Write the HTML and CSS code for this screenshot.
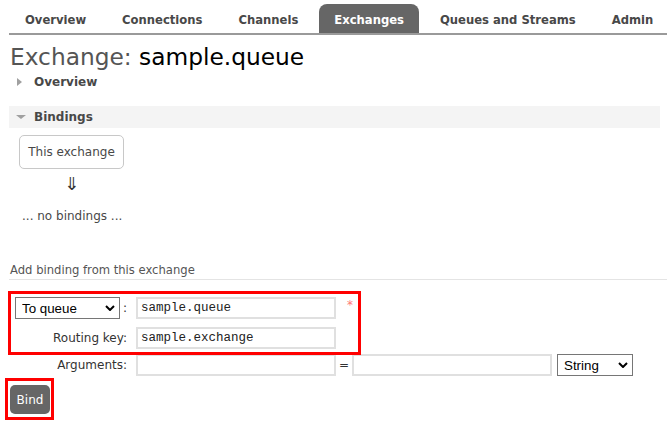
FILE: index.html
```html
<!DOCTYPE html>
<html>
<head>
<meta charset="utf-8">
<title>Exchange: sample.queue</title>
<link rel="stylesheet" href="styles.css">
</head>
<body>
<nav class="tabs">
  <a class="tab">Overview</a>
  <a class="tab">Connections</a>
  <a class="tab">Channels</a>
  <a class="tab tab-active">Exchanges</a>
  <a class="tab">Queues and Streams</a>
  <a class="tab">Admin</a>
</nav>
<h1 class="title"><span class="title-label">Exchange:</span> <span class="title-name">sample.queue</span></h1>
<div class="section"><span class="tri-slot"><span class="tri-right"></span></span>Overview</div>
<div class="section section-open"><span class="tri-slot"><span class="tri-down"></span></span>Bindings</div>
<div class="bindings">
  <div class="node">This exchange</div>
  <div class="arrow">⇓</div>
  <p class="empty">... no bindings ...</p>
</div>
<h2 class="subhead">Add binding from this exchange</h2>
<form class="bind-form">
  <div class="highlight">
    <div class="row">
      <div class="label">
        <span class="sel-box sel-dest">
          <select class="sel"><option>To queue</option></select>
          <svg class="chev" width="10" height="6" viewBox="0 0 10 6"><path d="M1 1 L5 5 L9 1" fill="none" stroke="#000" stroke-width="2"/></svg>
        </span><span class="colon">:</span>
      </div>
      <input class="field" type="text" value="sample.queue">
      <span class="req">*</span>
    </div>
    <div class="row">
      <div class="label">Routing key:</div>
      <input class="field" type="text" value="sample.exchange">
    </div>
  </div>
  <div class="row row-args">
    <div class="label">Arguments:</div>
    <input class="field" type="text">
    <span class="eq">=</span>
    <input class="field" type="text">
    <span class="sel-box sel-type">
      <select class="sel"><option>String</option></select>
      <svg class="chev" width="10" height="6" viewBox="0 0 10 6"><path d="M1 1 L5 5 L9 1" fill="none" stroke="#000" stroke-width="2"/></svg>
    </span>
  </div>
  <div class="btn-wrap"><button class="btn" type="button">Bind</button></div>
</form>
</body>
</html>
```

FILE: styles.css
```css
* { box-sizing: border-box; }

body {
  margin: 0;
  font: 12px "DejaVu Sans", Verdana, sans-serif;
  color: #484848;
  background: #fff;
}

.tabs {
  display: flex;
  margin-left: 9px;
  padding: 4px 0 0 1px;
  border-bottom: 2px solid #9a9a9a;
}

.tab {
  height: 29px;
  line-height: 32px;
  padding: 0 15px;
  margin-right: 6px;
  font-size: 11.6px;
  font-weight: bold;
  white-space: nowrap;
  color: #484848;
  border-radius: 8px 8px 0 0;
}

.tab-active {
  background: #666;
  color: #fff;
}

.title {
  margin: 5px 0 0 10px;
  height: 30px;
  font-size: 23.3px;
  line-height: 34px;
  font-weight: normal;
}

.title-label { color: #555; }
.title-name { color: #000; }

.section {
  display: flex;
  align-items: center;
  height: 22px;
  margin: 1px 7px 0 9px;
  font-weight: bold;
  color: #484848;
}

.section-open {
  margin-top: 13px;
  background: #f4f4f4;
}

.tri-slot {
  display: flex;
  align-items: center;
  width: 18px;
  margin-left: 7px;
  height: 22px;
}

.tri-right {
  margin-left: 1px;
  width: 0;
  height: 0;
  border-top: 4px solid transparent;
  border-bottom: 4px solid transparent;
  border-left: 5px solid #a0a0a0;
}

.tri-down {
  width: 0;
  height: 0;
  border-left: 5px solid transparent;
  border-right: 5px solid transparent;
  border-top: 4px solid #a0a0a0;
}

.bindings {
  padding-left: 19px;
  margin-top: 7px;
}

.node {
  width: 105px;
  height: 34px;
  line-height: 32px;
  text-align: center;
  border: 1px solid #c8c8c8;
  border-radius: 5px;
  color: #484848;
}

.arrow {
  width: 105px;
  margin-top: 5px;
  text-align: center;
  font-size: 18px;
  line-height: 20px;
  color: #333;
}

.empty {
  margin: 14px 0 0 3px;
  line-height: 16px;
}

.subhead {
  margin: 38px 0 0 9px;
  padding: 0 0 1px 1px;
  font-size: 11.6px;
  font-weight: normal;
  line-height: 16px;
  color: #555;
  border-bottom: 1px solid #e4e4e4;
}

.bind-form {
  margin: 14px 0 0 0;
}

.highlight {
  width: 347px;
  margin-left: 11px;
  padding: 3px 4px;
  outline: 3px solid #f00;
  display: flex;
  flex-direction: column;
  gap: 8px;
}

.row {
  display: flex;
  align-items: center;
  height: 22px;
}

.row-args {
  margin-top: 2px;
  padding-left: 15px;
}

.label {
  width: 112px;
  display: flex;
  align-items: center;
  justify-content: flex-end;
  margin-right: 9px;
  color: #333;
}

.colon { margin-left: 3px; }

.sel-box {
  position: relative;
  display: block;
  height: 22px;
}

.sel {
  appearance: none;
  -webkit-appearance: none;
  display: block;
  width: 100%;
  height: 22px;
  font: 13.333px "Liberation Sans", Arial, sans-serif;
  color: #000;
  background: #fff;
  border: 1px solid #767676;
  border-radius: 0;
  padding: 0 6px;
}

.chev {
  position: absolute;
  right: 5px;
  top: 8px;
  pointer-events: none;
}

.sel-dest { width: 105px; }

.sel-type {
  width: 76px;
  margin-left: 5px;
}

.field {
  width: 200px;
  height: 22px;
  padding: 0 3px;
  font: 12.5px "Liberation Mono", "Courier New", monospace;
  color: #222;
  border: 2px solid #e0e0e0;
  background: #fff;
}

.req {
  align-self: flex-start;
  margin: 2px 0 0 11px;
  color: #f77;
  font-size: 12px;
  line-height: 12px;
}

.eq {
  width: 16px;
  text-align: center;
  color: #333;
}

.btn-wrap {
  width: 49px;
  height: 42px;
  margin: 2px 0 0 5px;
  padding: 4px 1px 3px 2px;
  border: 3px solid #f00;
}

.btn {
  display: block;
  width: 40px;
  height: 29px;
  padding: 0;
  border: none;
  border-radius: 5px;
  background: #666;
  color: #fff;
  font: 12px "DejaVu Sans", Verdana, sans-serif;
}
```
